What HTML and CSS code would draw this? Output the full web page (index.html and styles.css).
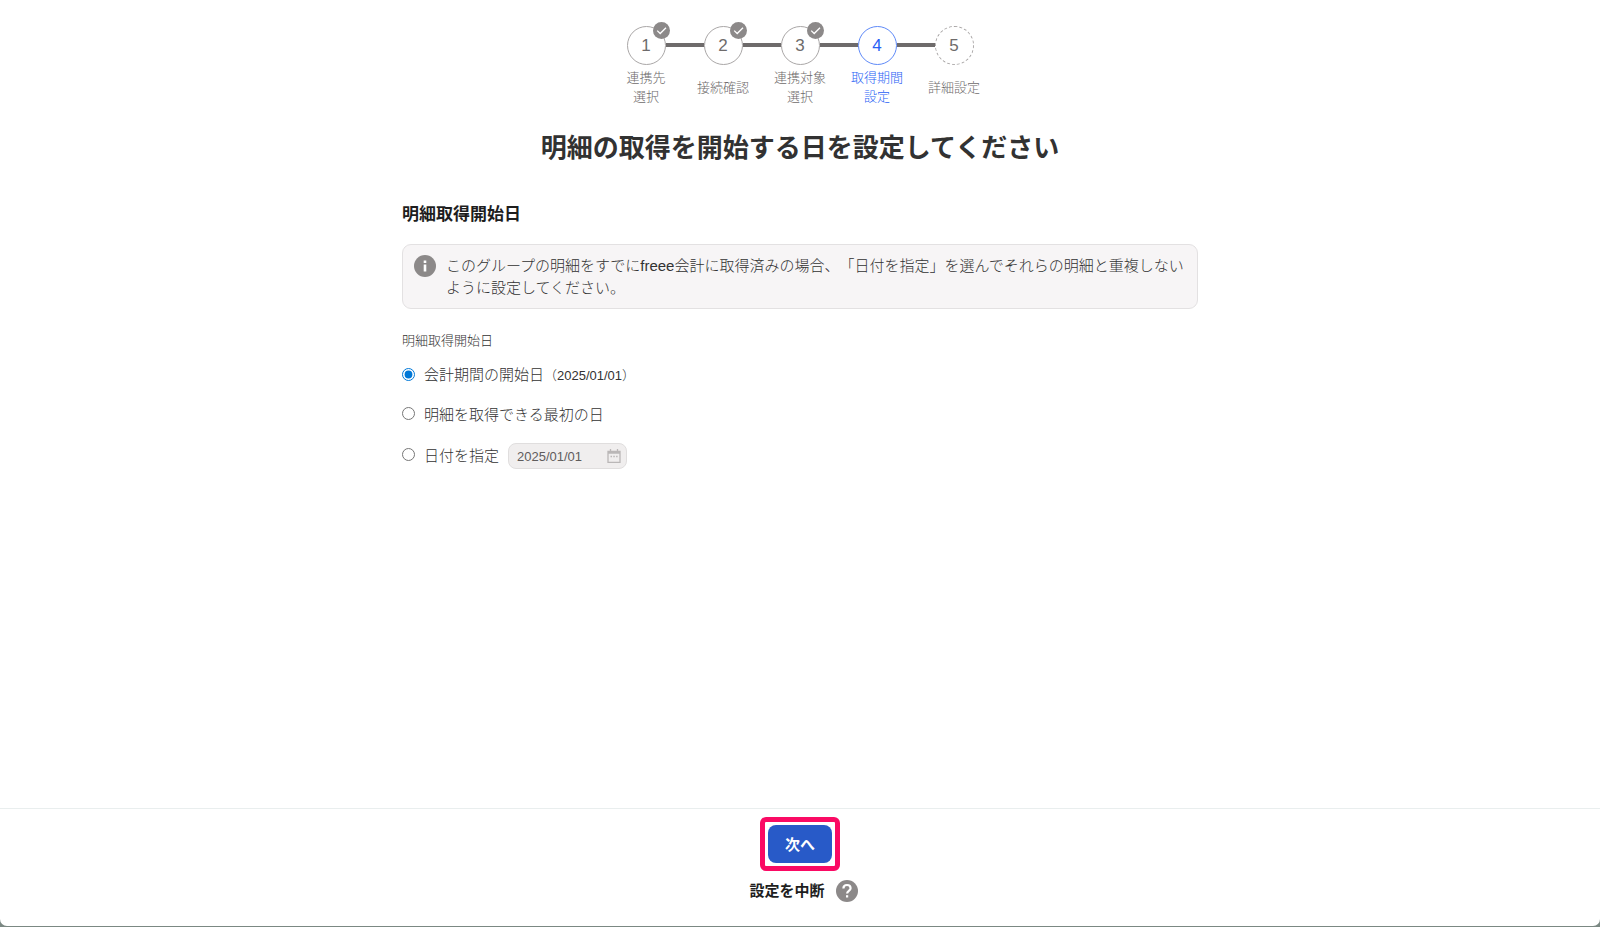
FILE: index.html
```
<!DOCTYPE html>
<html lang="ja">
<head>
  <meta charset="UTF-8">
  <meta name="viewport" content="width=device-width, initial-scale=1">
  <title>明細の取得期間設定</title>
  <link rel="stylesheet" href="styles.css">
</head>
<body>
  <div class="page">
    <main class="main">
      <ol class="stepper">
        <li class="step">
          <span class="step-circle">1
            <svg class="step-check" viewBox="0 0 17 17"><circle cx="8.5" cy="8.5" r="8.5"/><path d="M4.200 8.600l3 2.900 5.800-5.800"/></svg>
          </span>
          <span class="step-label">連携先<br>選択</span>
        </li>
        <li class="step">
          <span class="step-circle">2
            <svg class="step-check" viewBox="0 0 17 17"><circle cx="8.5" cy="8.5" r="8.5"/><path d="M4.200 8.600l3 2.900 5.800-5.800"/></svg>
          </span>
          <span class="step-label">接続確認</span>
        </li>
        <li class="step">
          <span class="step-circle">3
            <svg class="step-check" viewBox="0 0 17 17"><circle cx="8.5" cy="8.5" r="8.5"/><path d="M4.200 8.600l3 2.900 5.800-5.800"/></svg>
          </span>
          <span class="step-label">連携対象<br>選択</span>
        </li>
        <li class="step current" aria-current="step">
          <span class="step-circle">4</span>
          <span class="step-label">取得期間<br>設定</span>
        </li>
        <li class="step upcoming">
          <span class="step-circle">5</span>
          <span class="step-label">詳細設定</span>
        </li>
      </ol>

      <h1 class="title">明細の取得を開始する日を設定してください</h1>

      <form class="content" id="periodForm">
        <h2 class="section-title">明細取得開始日</h2>
        <div class="info">
          <svg class="info-icon" viewBox="0 0 22 22"><circle cx="11" cy="11" r="11"/><path d="M9.7 5.5h2.6V8H9.7zM9.7 9.4h2.6v7H9.7z"/></svg>
          <p>このグループの明細をすでにfreee会計に取得済みの場合、「日付を指定」を選んでそれらの明細と重複しないように設定してください。</p>
        </div>

        <fieldset class="options">
          <legend>明細取得開始日</legend>
          <div class="option">
            <input type="radio" name="start" id="startPeriod" checked>
            <label for="startPeriod">会計期間の開始日<small>（2025/01/01）</small></label>
          </div>
          <div class="option">
            <input type="radio" name="start" id="startFirst">
            <label for="startFirst">明細を取得できる最初の日</label>
          </div>
          <div class="option">
            <input type="radio" name="start" id="startDate">
            <label for="startDate">日付を指定</label>
            <div class="date-field">
              <input type="text" value="2025/01/01" aria-label="開始日" disabled>
              <svg class="calendar" viewBox="0 0 14 14"><path d="M1 2.500h12v10.800H1z"/><path d="M1 3.500h12" stroke-width="2.500"/><path d="M3.500 0v3M10.500 0v3"/><path d="M3.500 7.500h1.500M6.300 7.500h1.500M9.100 7.500h1.500"/></svg>
            </div>
          </div>
        </fieldset>
      </form>
    </main>

    <footer class="footer">
      <div class="highlight">
        <button type="submit" form="periodForm" class="next">次へ</button>
      </div>
      <div class="suspend">
        <button type="button" class="suspend-button">設定を中断</button>
        <button type="button" class="help" aria-label="ヘルプ">
          <svg viewBox="0 0 22 22"><circle cx="11" cy="11" r="11"/><path d="M7.400 8.500C7.400 6.300 9 5 11 5s3.600 1.300 3.600 3.300c0 2.500-3.500 2.800-3.500 5.200"/><path d="M11.100 15.200v2.300"/></svg>
        </button>
      </div>
    </footer>
  </div>
</body>
</html>
```
FILE: styles.css
```
* {
  margin: 0;
  padding: 0;
  box-sizing: border-box;
}
body {
  font-family: "Liberation Sans", "Noto Sans CJK JP", sans-serif;
  font-size: 15px;
  font-weight: 300;
  line-height: 22px;
  text-spacing-trim: space-all;
  color: #323232;
  background: #7b8883;
}
button, input {
  font-family: inherit;
}
svg {
  display: block;
}
.page {
  display: flex;
  flex-direction: column;
  min-height: calc(100vh - 1px);
  background: #fff;
  border-radius: 0 0 7px 7px;
}
.main {
  flex: 1;
  padding: 26px 24px;
}

/* ステップ表示 */
.stepper {
  display: flex;
  justify-content: center;
  list-style: none;
}
.step {
  position: relative;
  display: flex;
  flex-direction: column;
  align-items: center;
  gap: 3px;
  width: 77px;
  color: #6e6b6b;
}
.step + .step::before {
  content: "";
  position: absolute;
  top: 17px;
  right: 58px;
  width: 38px;
  height: 4px;
  background: #6e6b6b;
}
.step-circle {
  position: relative;
  display: flex;
  align-items: center;
  justify-content: center;
  width: 39px;
  height: 39px;
  border: 1px solid #aaa7a7;
  border-radius: 50%;
  font-size: 17px;
}
.step-check {
  position: absolute;
  top: -5px;
  right: -5px;
  width: 17px;
  height: 17px;
  fill: #8c8989;
}
.step-check path {
  fill: none;
  stroke: #fff;
  stroke-width: 1.3;
}
.step-label {
  display: flex;
  align-items: center;
  height: 38px;
  font-size: 13px;
  line-height: 19px;
  text-align: center;
}
.current {
  color: #285ff5;
}
.current .step-circle {
  border-color: #5f8af8;
}
.upcoming .step-circle {
  border-style: dashed;
}

.title {
  margin-top: 22px;
  font-size: 26px;
  line-height: 40px;
  text-align: center;
}
.content {
  max-width: 796px;
  margin: 34px auto 0;
}
.section-title {
  font-size: 17px;
  line-height: 26px;
  color: #1e1e1e;
}
.info {
  display: flex;
  gap: 10px;
  margin-top: 16px;
  padding: 10px 11px 9px;
  background: #f7f5f6;
  border: 1px solid #e3e1e2;
  border-radius: 9px;
}
.info-icon {
  flex: none;
  width: 22px;
  height: 22px;
  fill: #8c8989;
}
.info-icon path {
  fill: #fff;
}

/* 開始日の選択 */
.options {
  margin-top: 22px;
  border: none;
}
.options legend {
  margin-bottom: 13px;
  font-size: 13px;
  line-height: 20px;
}
.option {
  display: flex;
  align-items: center;
  gap: 9px;
}
.option + .option {
  margin-top: 17px;
}
.option input[type="radio"] {
  width: 13px;
  height: 13px;
  margin: 0 0 3px;
  accent-color: #0078d7;
}
.option small {
  font-size: 13px;
}
.date-field {
  display: flex;
  align-items: center;
  width: 119px;
  height: 26px;
  padding: 0 5px 0 8px;
  background: #f0eeee;
  border: 1px solid #e0dede;
  border-radius: 8px;
}
.date-field input {
  flex: 1;
  min-width: 0;
  border: none;
  background: none;
  font-size: 13px;
  color: #5f5c5c;
}
.calendar {
  width: 14px;
  height: 14px;
  fill: none;
  stroke: #bab7b7;
  stroke-width: 1.3;
}

.footer {
  display: flex;
  flex-direction: column;
  align-items: center;
  padding: 8px 24px 24px;
  border-top: 1px solid #e9eeee;
}
.highlight {
  padding: 3px;
  border: 5px solid #fa0a64;
  border-radius: 6px;
}
.next {
  display: block;
  width: 64px;
  height: 38px;
  padding-bottom: 2px;
  border: none;
  border-radius: 8px;
  background: #285ac8;
  color: #fff;
  font-size: 15px;
  font-weight: bold;
  cursor: pointer;
}
.suspend {
  display: flex;
  align-items: center;
  gap: 11px;
  margin-top: 9px;
  padding-left: 7px;
}
.suspend-button,
.help {
  border: none;
  background: none;
  cursor: pointer;
}
.suspend-button {
  font-size: 15px;
  font-weight: bold;
  line-height: 22px;
  color: #1e1e1e;
}
.help svg {
  width: 22px;
  height: 22px;
  fill: #8c8989;
}
.help path {
  fill: none;
  stroke: #fff;
  stroke-width: 2.2;
}
```
